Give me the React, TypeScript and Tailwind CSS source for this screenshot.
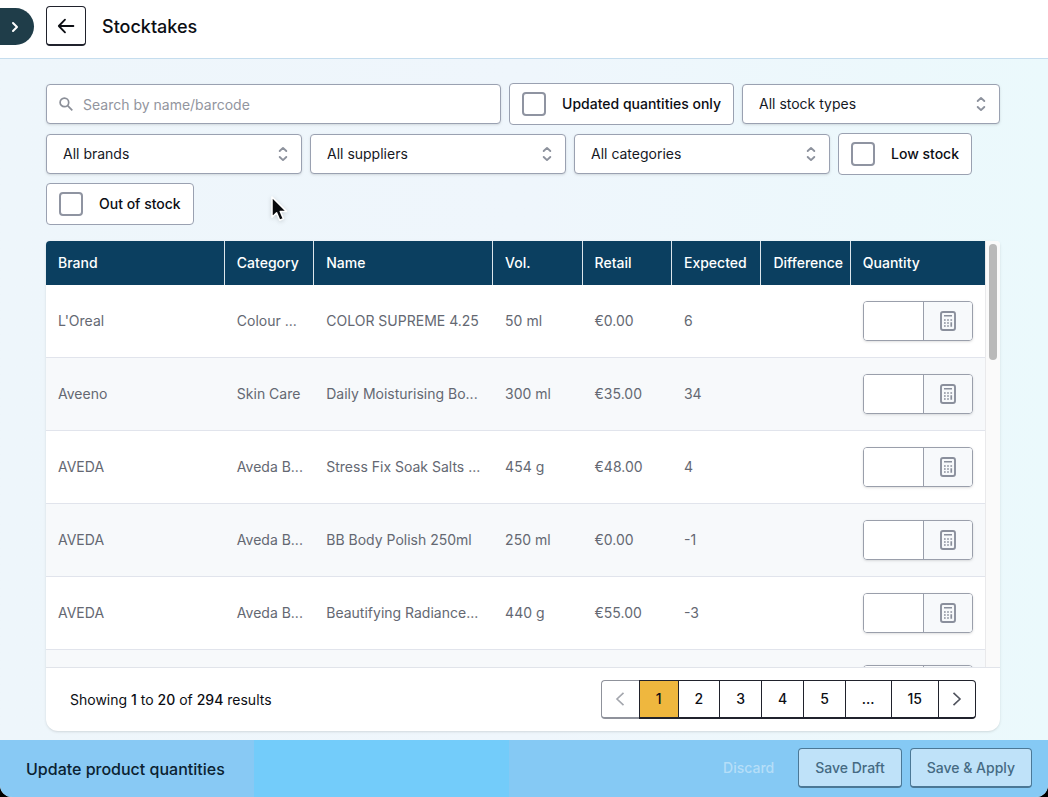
import React, { useState } from 'react';
import { ChevronRight } from 'lucide-react';

interface Product {
  brand: string;
  category: string;
  name: string;
  volume: string;
  retail: string;
  expected: number;
}

const products: Product[] = [
  { brand: "L'Oreal", category: 'Colour ...', name: 'COLOR SUPREME 4.25', volume: '50 ml', retail: '€0.00', expected: 6 },
  { brand: 'Aveeno', category: 'Skin Care', name: 'Daily Moisturising Bo...', volume: '300 ml', retail: '€35.00', expected: 34 },
  { brand: 'AVEDA', category: 'Aveda B...', name: 'Stress Fix Soak Salts ...', volume: '454 g', retail: '€48.00', expected: 4 },
  { brand: 'AVEDA', category: 'Aveda B...', name: 'BB Body Polish 250ml', volume: '250 ml', retail: '€0.00', expected: -1 },
  { brand: 'AVEDA', category: 'Aveda B...', name: 'Beautifying Radiance...', volume: '440 g', retail: '€55.00', expected: -3 },
];

const columns = [
  { label: 'Brand', width: 'w-4/21' },
  { label: 'Category', width: 'w-2/21' },
  { label: 'Name', width: 'w-4/21' },
  { label: 'Vol.', width: 'w-2/21' },
  { label: 'Retail', width: 'w-2/21' },
  { label: 'Expected', width: 'w-2/21' },
  { label: 'Difference', width: 'w-2/21' },
  { label: 'Quantity', width: 'w-3/21' },
];

const pages = ['1', '2', '3', '4', '5', '...', '15'];

function CalculatorIcon() {
  return (
    <svg width="18" height="22" viewBox="0 0 18 22" fill="none" stroke="#8a8f9c" aria-hidden="true">
      <rect x="2" y="2" width="14" height="18" rx="2" strokeWidth="1.9" />
      <path d="M5 5.75h8" strokeWidth="1.7" />
      <path d="M5 10h1.7M8.15 10h1.7M11.4 10h1.7M5 13h1.7M8.15 13h1.7M5 16h1.7M8.15 16h1.7" strokeWidth="1.6" />
      <path d="M12.25 12.2v4.6" strokeWidth="1.7" />
    </svg>
  );
}

function SelectField({ label, className }: { label: string; className: string }) {
  return (
    <div className={`relative ${className}`}>
      <select
        aria-label={label}
        className="h-10 w-full appearance-none rounded border border-[#9aa1b1] bg-white pl-4 pr-10 text-sm text-[#16181f] shadow-sm"
      >
        <option>{label}</option>
      </select>
      <svg
        className="pointer-events-none absolute right-3 top-3"
        width="14"
        height="16"
        viewBox="0 0 14 16"
        fill="none"
        stroke="#8d929d"
        strokeWidth="1.9"
        strokeLinecap="round"
        strokeLinejoin="round"
        aria-hidden="true"
      >
        <path d="M3.7 5 7 1.9 10.3 5M3.7 11 7 14.1 10.3 11" />
      </svg>
    </div>
  );
}

function CheckField({ label }: { label: string }) {
  return (
    <label className="flex h-[42px] items-center gap-4 rounded border border-[#9aa1b1] bg-white px-3 text-sm font-medium text-[#0c0e14]">
      <input type="checkbox" className="size-6 appearance-none rounded border-2 border-[#8f94a1] bg-white checked:bg-[#0b3f60]" />
      {label}
    </label>
  );
}

function QuantityField({ name }: { name: string }) {
  return (
    <div className="flex h-10 overflow-hidden rounded border border-[#9a9fab] shadow-sm">
      <input type="text" aria-label={`Quantity for ${name}`} className="w-0 flex-1 bg-white px-3" />
      <button
        type="button"
        aria-label="Open calculator"
        className="flex w-[49px] items-center justify-center border-l border-[#9a9fab] bg-[#f7f9fb]"
      >
        <CalculatorIcon />
      </button>
    </div>
  );
}

export default function App() {
  const [page, setPage] = useState('1');

  return (
    <div className="h-screen bg-black font-['Inter',sans-serif] text-sm">
      <div className="relative flex h-full flex-col overflow-hidden rounded-b-xl bg-linear-to-r from-[#eef6fb] via-[#eff6fc] to-[#ebf9fc]">
        {/* Top bar */}
        <header className="flex h-[59px] shrink-0 items-start border-b border-[#c5ddee] bg-white">
          <button
            type="button"
            aria-label="Expand menu"
            className="mt-2 flex h-[37px] w-[34px] items-center justify-center rounded-r-full bg-[#1f3d49] pr-1 text-white"
          >
            <ChevronRight className="size-4" strokeWidth={3} />
          </button>
          <button
            type="button"
            aria-label="Back"
            className="ml-3 mt-[6px] flex size-10 items-center justify-center rounded border border-b-2 border-[#20222c] bg-white text-[#0c0e14]"
          >
            <svg width="18" height="16" viewBox="0 0 18 16" fill="none" stroke="currentColor" strokeWidth="1.8" strokeLinecap="round" strokeLinejoin="round" aria-hidden="true">
              <path d="M8 1.7 1.8 8 8 14.3M1.8 8h14.6" />
            </svg>
          </button>
          <h1 className="ml-4 mt-3 text-lg font-medium leading-[30px] text-[#0c0e14]">Stocktakes</h1>
        </header>

        <main className="flex min-h-0 flex-1 flex-col px-[46px] pb-[9px] pt-6 sm:pr-12">
          {/* Filters */}
          <div className="flex flex-wrap items-center gap-2">
            <div className="relative min-w-[300px] flex-1 basis-[440px]">
              <svg
                className="pointer-events-none absolute left-3 top-3"
                width="16"
                height="16"
                viewBox="0 0 16 16"
                fill="none"
                stroke="#8b8f98"
                strokeWidth="1.7"
                aria-hidden="true"
              >
                <circle cx="6.4" cy="6.4" r="4.3" />
                <path d="m9.6 9.6 4.7 4.7" />
              </svg>
              <input
                type="search"
                aria-label="Search by name/barcode"
                placeholder="Search by name/barcode"
                className="h-10 w-full rounded border border-[#9aa1b1] bg-white pl-9 pr-3 text-sm shadow-sm placeholder:text-[#92959e]"
              />
            </div>
            <CheckField label="Updated quantities only" />
            <SelectField label="All stock types" className="w-[258px]" />
            <SelectField label="All brands" className="w-64" />
            <SelectField label="All suppliers" className="w-64" />
            <SelectField label="All categories" className="w-64" />
            <CheckField label="Low stock" />
            <CheckField label="Out of stock" />
          </div>

          {/* Products */}
          <section className="mt-4 flex min-h-0 flex-1 flex-col overflow-hidden rounded-t rounded-b-xl bg-white shadow">
            <div className="flex min-h-0 flex-1">
              <div className="min-w-0 flex-1 overflow-hidden">
                <table className="w-full table-fixed border-separate border-spacing-0 text-left">
                  <thead>
                    <tr className="bg-[#0b3f60] text-white">
                      {columns.map((column) => (
                        <th
                          key={column.label}
                          className={`h-11 whitespace-nowrap border-r border-[#dce6ec] pl-3 font-medium last:border-r-0 ${column.width}`}
                        >
                          {column.label}
                        </th>
                      ))}
                    </tr>
                  </thead>
                  <tbody className="text-[#646872]">
                    {products.map((product) => (
                      <tr key={product.name} className="odd:bg-white even:bg-[#f7f9fb]">
                        <td className="h-[73px] truncate border-b border-[#e1e4ec] px-3">{product.brand}</td>
                        <td className="whitespace-nowrap border-b border-[#e1e4ec] pl-3">{product.category}</td>
                        <td className="whitespace-nowrap border-b border-[#e1e4ec] pl-3">{product.name}</td>
                        <td className="whitespace-nowrap border-b border-[#e1e4ec] pl-3">{product.volume}</td>
                        <td className="whitespace-nowrap border-b border-[#e1e4ec] pl-3">{product.retail}</td>
                        <td className="whitespace-nowrap border-b border-[#e1e4ec] pl-3">{product.expected}</td>
                        <td className="border-b border-[#e1e4ec]" />
                        <td className="border-b border-[#e1e4ec] px-3">
                          <QuantityField name={product.name} />
                        </td>
                      </tr>
                    ))}
                    <tr className="bg-[#f7f9fb]">
                      <td colSpan={7} className="h-[70px]" />
                      <td className="px-3">
                        <QuantityField name="next product" />
                      </td>
                    </tr>
                  </tbody>
                </table>
              </div>
              <div className="w-[15px] border-l border-[#e9e9eb] bg-[#fafafa] px-[3px] pt-[3px]">
                <div className="h-[116px] w-2 rounded-full bg-[#b9b9b9]" />
              </div>
            </div>

            {/* Pagination */}
            <footer className="flex h-16 shrink-0 items-center justify-between border-t border-[#e1e4ea] px-6 text-[#0c0e14]">
              <p>
                Showing <span className="font-medium">1</span> to <span className="font-medium">20</span> of{' '}
                <span className="font-medium">294</span> results
              </p>
              <nav aria-label="Pagination" className="flex h-[39px]">
                <button
                  type="button"
                  aria-label="Previous page"
                  disabled
                  className="flex w-[38px] items-center justify-center rounded-l border border-b-2 border-r-0 border-[#8f929b] text-[#a3a6ad]"
                >
                  <svg width="10" height="16" viewBox="0 0 10 16" fill="none" stroke="currentColor" strokeWidth="1.6" aria-hidden="true">
                    <path d="M8.5 1.8 2 8l6.5 6.2" />
                  </svg>
                </button>
                {pages.map((item) => (
                  <button
                    key={item}
                    type="button"
                    onClick={() => setPage(item)}
                    className={`border border-b-2 border-r-0 border-[#20222c] px-4 font-medium ${
                      item === page ? 'bg-[#efb73e]' : 'bg-white'
                    }`}
                  >
                    {item}
                  </button>
                ))}
                <button
                  type="button"
                  aria-label="Next page"
                  className="flex w-[38px] items-center justify-center rounded-r border border-b-2 border-[#20222c] text-[#50535d]"
                >
                  <svg width="10" height="16" viewBox="0 0 10 16" fill="none" stroke="currentColor" strokeWidth="1.6" aria-hidden="true">
                    <path d="M1.5 1.8 8 8l-6.5 6.2" />
                  </svg>
                </button>
              </nav>
            </footer>
          </section>
        </main>

        {/* Save bar */}
        <div className="flex h-[57px] shrink-0 items-center justify-between bg-[linear-gradient(90deg,#88c9f4_0_254px,#73ccfa_254px_509px,#85c9f4_509px)] pl-[26px] pr-4">
          <h2 className="text-base font-medium text-[#0b2231]">Update product quantities</h2>
          <div className="flex items-center gap-2 pb-px font-medium">
            <button type="button" className="h-10 px-4 text-[#b5def8]">
              Discard
            </button>
            <button type="button" className="h-10 rounded border border-b-2 border-[#4b7896] bg-[#bfe2f9] px-4 text-[#456a83]">
              Save Draft
            </button>
            <button type="button" className="h-10 rounded border border-b-2 border-[#4b7896] bg-[#bfe2f9] px-4 text-[#456a83]">
              Save &amp; Apply
            </button>
          </div>
        </div>

        {/* Mouse pointer */}
        <svg
          className="pointer-events-none absolute left-[270px] top-[195px] drop-shadow-sm"
          width="18"
          height="28"
          viewBox="0 0 18 28"
          aria-hidden="true"
        >
          <path
            d="M2 2v20.2l4.6-4.4 3.1 7.4 3.7-1.6-3.1-7.2h6.2z"
            fill="#08090c"
            stroke="#fff"
            strokeWidth="1.5"
            strokeLinejoin="round"
          />
        </svg>
      </div>
    </div>
  );
}
